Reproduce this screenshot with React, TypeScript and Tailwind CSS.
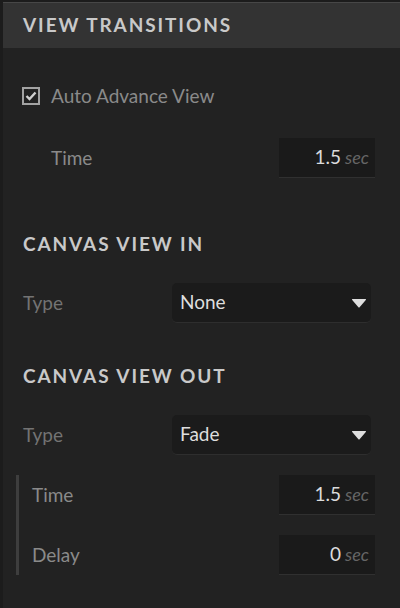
const font = { fontFamily: "Lato, 'Noto Sans', sans-serif" };

const NumberField = ({ value }: { value: string }) => (
  <div className="flex h-[40px] w-[96px] items-center justify-end border-b border-[#303030] bg-[#1a1a1a] pr-[6px]">
    <span className="text-[19px] text-[#dcdcdc]">{value}</span>
    <span className="ml-[4px] text-[18px] italic text-[#666666]">sec</span>
  </div>
);

const Select = ({ value }: { value: string }) => (
  <div className="flex h-[40px] w-[199px] items-center justify-between rounded-[5px] border-b border-[#2e2e2e] bg-[#1b1b1b] pl-[8px] pr-[4px]">
    <span className="text-[19px] text-[#dedede]">{value}</span>
    <svg width="16" height="10" viewBox="0 0 16 10">
      <path d="M1.5 1 L14.5 1 Q15.5 1 14.8 2 L8.8 9 Q8 10 7.2 9 L1.2 2 Q0.5 1 1.5 1 Z" fill="#dedede" />
    </svg>
  </div>
);

const SectionTitle = ({ children }: { children: string }) => (
  <div className="flex h-[24px] items-center pl-[20px] text-[19px] font-bold tracking-[1.9px] text-[#c9c9c9]">
    {children}
  </div>
);

export default function App() {
  return (
    <div className="h-[608px] w-[400px] overflow-hidden bg-[#1c1c1c] pl-[3px] pt-[2px]" style={font}>
      <div className="flex h-full flex-col bg-[#222222]">
        <div className="flex h-[46px] items-center border-t border-[#474747] bg-[#333333] pl-[20px] text-[19px] font-bold tracking-[1.9px] text-[#c9c9c9]">
          VIEW TRANSITIONS
        </div>

        <div className="mt-[39px] flex h-[18px] items-center pl-[19px]">
          <div className="flex h-[18px] w-[18px] items-center justify-center border-2 border-[#a3a3a3]">
            <svg width="12" height="10" viewBox="0 0 12 10">
              <path d="M1.5 5 L4.5 8 L10.5 1.5" fill="none" stroke="#d0d0d0" strokeWidth="2.4" />
            </svg>
          </div>
          <span className="ml-[11px] text-[19px] text-[#8a8a8a]">Auto Advance View</span>
        </div>

        <div className="mt-[33px] flex h-[40px] items-center justify-between pl-[48px] pr-[25px]">
          <span className="text-[19px] text-[#8a8a8a]">Time</span>
          <NumberField value="1.5" />
        </div>

        <div className="mt-[54px]">
          <SectionTitle>CANVAS VIEW IN</SectionTitle>
        </div>

        <div className="mt-[27px] flex h-[40px] items-center justify-between pl-[20px] pr-[29px]">
          <span className="text-[19px] text-[#737373]">Type</span>
          <Select value="None" />
        </div>

        <div className="mt-[41px]">
          <SectionTitle>CANVAS VIEW OUT</SectionTitle>
        </div>

        <div className="mt-[27px] flex h-[40px] items-center justify-between pl-[20px] pr-[29px]">
          <span className="text-[19px] text-[#737373]">Type</span>
          <Select value="Fade" />
        </div>

        <div className="ml-[13px] mt-[20px] flex flex-col gap-[20px] border-l-[3px] border-[#3e3e3e] pl-[13px] pr-[25px]">
          <div className="flex h-[40px] items-center justify-between">
            <span className="text-[19px] text-[#8a8a8a]">Time</span>
            <NumberField value="1.5" />
          </div>
          <div className="flex h-[40px] items-center justify-between">
            <span className="text-[19px] text-[#8a8a8a]">Delay</span>
            <NumberField value="0" />
          </div>
        </div>
      </div>
    </div>
  );
}
